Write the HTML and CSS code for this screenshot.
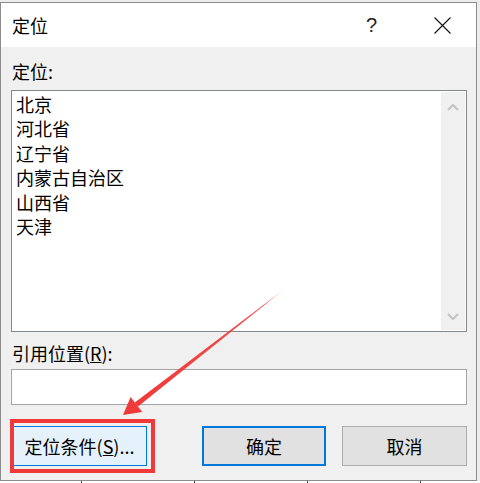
FILE: index.html
```html
<!DOCTYPE html>
<html lang="zh">
<head>
<meta charset="utf-8">
<link rel="stylesheet" href="styles.css">
</head>
<body>
<div class="dialog">
  <div class="titlebar">
    <span class="title">定位</span>
    <span class="help">?</span>
    <svg class="close" width="17" height="17" viewBox="0 0 17 17"><path d="M0.5 0.5 L16.5 16.5 M16.5 0.5 L0.5 16.5" stroke="#111" stroke-width="1.1" fill="none"/></svg>
  </div>
  <div class="content">
    <div class="label">定位:</div>
    <div class="listbox">
      <ul class="items">
        <li>北京</li>
        <li>河北省</li>
        <li>辽宁省</li>
        <li>内蒙古自治区</li>
        <li>山西省</li>
        <li>天津</li>
      </ul>
      <div class="scrollbar">
        <svg class="chev" width="12" height="8" viewBox="0 0 12 8"><polyline points="1,7 6,2 11,7" stroke="#c4c4c4" stroke-width="2.2" fill="none"/></svg>
        <svg class="chev" width="12" height="8" viewBox="0 0 12 8"><polyline points="1,1 6,6 11,1" stroke="#c4c4c4" stroke-width="2.2" fill="none"/></svg>
      </div>
    </div>
    <div class="label ref-label">引用位置(<u>R</u>):</div>
    <div class="textbox"></div>
    <div class="buttons">
      <div class="btn btn-special">定位条件(<u>S</u>)...</div>
      <div class="btn btn-ok">确定</div>
      <div class="btn btn-cancel">取消</div>
    </div>
  </div>
</div>
<div class="grid-strip">
  <span></span><span></span><span></span><span></span>
</div>
<div class="highlight"></div>
<svg class="arrow" width="480" height="483" viewBox="0 0 480 483">
  <defs>
    <linearGradient id="fade" x1="287" y1="287" x2="136" y2="404" gradientUnits="userSpaceOnUse">
      <stop offset="0" stop-color="#f03a3a" stop-opacity="0"/>
      <stop offset="0.15" stop-color="#f03a3a" stop-opacity="0.9"/>
      <stop offset="1" stop-color="#f03a3a"/>
    </linearGradient>
  </defs>
  <polygon points="287,287 138,406.4 134.8,402.6" fill="url(#fade)"/>
  <polygon points="123,415 142.2,412 130.6,397" fill="#f03a3a"/>
</svg>
</body>
</html>
```
FILE: styles.css
```css
html, body {
  margin: 0;
  padding: 0;
}
body {
  width: 480px;
  height: 483px;
  background: #ececec;
  position: relative;
  overflow: hidden;
  font-family: "Noto Sans CJK SC", "Noto Sans", sans-serif;
  color: #000;
}
.dialog {
  margin-top: 2px;
  width: 475px;
  border: 1px solid #8c8c8c;
  background: #f0f0f0;
}
.titlebar {
  height: 44px;
  background: #fff;
  display: flex;
  align-items: center;
  padding-left: 11px;
}
.title {
  flex: 1;
  font-size: 18px;
  line-height: 24px;
}
.help {
  font-family: "Liberation Sans", "DejaVu Sans", sans-serif;
  font-size: 20px;
  font-weight: 300;
  color: #222;
  line-height: 24px;
  margin-right: 57px;
}
.close {
  display: block;
  margin-right: 25px;
  margin-top: 0px;
}
.content {
  padding: 12px 9px 14px 10px;
}
.label {
  font-size: 18px;
  line-height: 24px;
  height: 24px;
  padding-left: 1px;
}
.listbox {
  margin-top: 7px;
  height: 240px;
  border: 1px solid #828790;
  background: #fff;
  display: flex;
}
.items {
  flex: 1;
  list-style: none;
  margin: 0;
  padding: 1px 0 0 4px;
  font-size: 18px;
  line-height: 24.4px;
}
.scrollbar {
  width: 24px;
  margin: 1px 1px 1px 0;
  background: #f0f0f0;
  display: flex;
  flex-direction: column;
  justify-content: space-between;
  align-items: center;
  padding: 11px 0 9px;
  box-sizing: border-box;
}
.chev {
  display: block;
}
.ref-label {
  margin-top: 9px;
}
.textbox {
  margin-top: 4px;
  height: 34px;
  border: 1px solid #a5a5a5;
  background: #fff;
}
.buttons {
  margin-top: 21px;
  display: flex;
  padding-left: 1px;
}
.btn {
  height: 40px;
  box-sizing: border-box;
  display: flex;
  align-items: center;
  justify-content: center;
  font-size: 18px;
  background: #e1e1e1;
  border: 1px solid #adadad;
}
.btn-special {
  width: 135px;
  background: #e5f1fb;
  border: 1px solid #0078d7;
}
.btn-ok {
  width: 124px;
  margin-left: 55px;
  border: 2px solid #0078d7;
}
.btn-cancel {
  width: 125px;
  margin-left: 16px;
}
.grid-strip {
  height: 2px;
  background: #fff;
  display: flex;
}
.grid-strip span {
  width: 1px;
  height: 2px;
  background: #444;
  margin-left: 81px;
}
.grid-strip span + span {
  margin-left: 112px;
}
.highlight {
  position: absolute;
  left: 10px;
  top: 419px;
  width: 137px;
  height: 46px;
  border: 4px solid #f03a3a;
}
.arrow {
  position: absolute;
  left: 0;
  top: 0;
}
```
